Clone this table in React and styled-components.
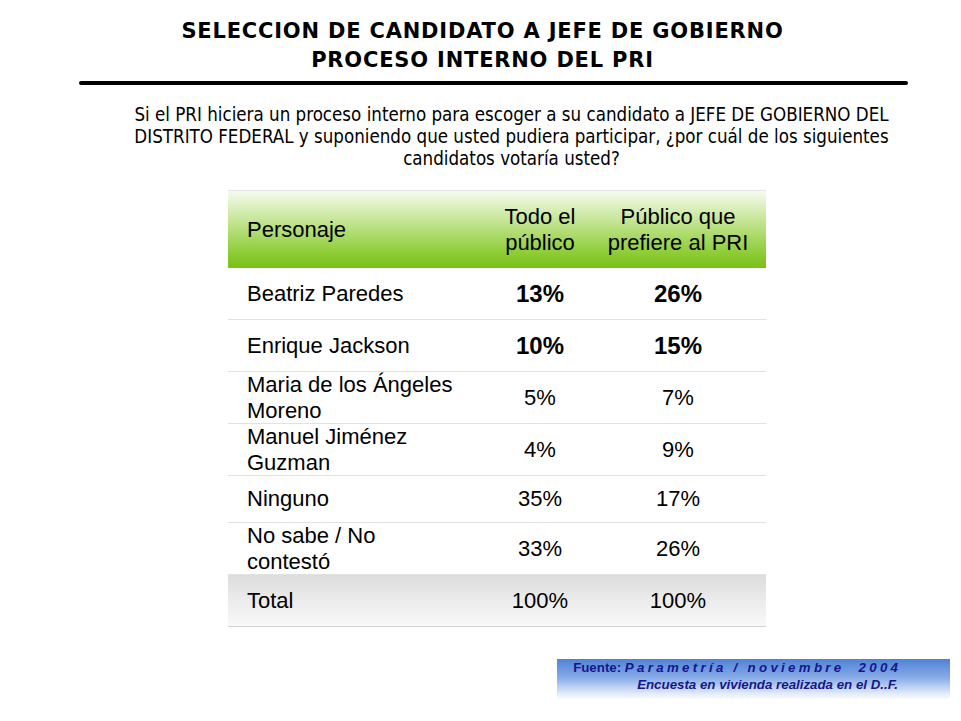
import React from "react";
import styled, { createGlobalStyle } from "styled-components";

const GlobalStyle = createGlobalStyle`
  html, body {
    margin: 0;
    padding: 0;
    background: #ffffff;
  }
`;

const rows = [
  { name: ["Beatriz Paredes"], all: "13%", pri: "26%", strong: true },
  { name: ["Enrique Jackson"], all: "10%", pri: "15%", strong: true },
  { name: ["Maria de los Ángeles", "Moreno"], all: "5%", pri: "7%" },
  { name: ["Manuel Jiménez", "Guzman"], all: "4%", pri: "9%" },
  { name: ["Ninguno"], all: "35%", pri: "17%", height: 47 },
  { name: ["No sabe / No", "contestó"], all: "33%", pri: "26%" },
];

export default function App() {
  return (
    <Slide>
      <GlobalStyle />
      <Title>
        SELECCION DE CANDIDATO A JEFE DE GOBIERNO
        <br />
        PROCESO INTERNO DEL PRI
      </Title>
      <Rule />
      <Question>
        Si el PRI hiciera un proceso interno para escoger a su candidato a JEFE DE GOBIERNO DEL
        <br />
        DISTRITO FEDERAL y suponiendo que usted pudiera participar, ¿por cuál de los siguientes
        <br />
        candidatos votaría usted?
      </Question>
      <Table>
        <HeaderRow>
          <NameCell>Personaje</NameCell>
          <ValueCell>Todo el<br />público</ValueCell>
          <ValueCell>Público que<br />prefiere al PRI</ValueCell>
        </HeaderRow>
        {rows.map((r) => (
          <Row key={r.name.join(" ")} h={r.height || 52}>
            <NameCell>
              {r.name.map((line, i) => (
                <div key={i}>{line}</div>
              ))}
            </NameCell>
            <ValueCell strong={r.strong}>{r.all}</ValueCell>
            <ValueCell strong={r.strong}>{r.pri}</ValueCell>
          </Row>
        ))}
        <TotalRow>
          <NameCell>Total</NameCell>
          <ValueCell>100%</ValueCell>
          <ValueCell>100%</ValueCell>
        </TotalRow>
      </Table>
      <Footer>
        <FooterLine>
          Fuente: <Spaced>Parametría / noviembre  2004</Spaced>
        </FooterLine>
        <FooterLine>
          <em>Encuesta en vivienda realizada en el D..F.</em>
        </FooterLine>
      </Footer>
    </Slide>
  );
}

const Slide = styled.div`
  width: 961px;
  height: 721px;
  display: flex;
  flex-direction: column;
  align-items: center;
  box-sizing: border-box;
  padding-top: 17px;
  background: #ffffff;
  overflow: hidden;
`;

const Title = styled.h1`
  margin: 0 0 0 4px;
  font-family: "DejaVu Sans", Verdana, sans-serif;
  font-weight: bold;
  font-size: 21px;
  letter-spacing: 0.8px;
  line-height: 29px;
  text-align: center;
  color: #000000;
`;

const Rule = styled.div`
  width: 829px;
  height: 4px;
  margin: 6px 0 0 25px;
  border-radius: 2px;
  background: #000000;
`;

const Question = styled.p`
  margin: 19px 0 0 62px;
  font-family: "DejaVu Sans Condensed", "DejaVu Sans", sans-serif;
  font-size: 18.6px;
  line-height: 22px;
  text-align: center;
  white-space: nowrap;
  color: #000000;
`;

const Table = styled.div`
  width: 538px;
  margin: 20px 0 0 33px;
  display: flex;
  flex-direction: column;
  font-family: "Liberation Sans", Arial, sans-serif;
  font-size: 22px;
  color: #000000;
  border-top: 1px solid #e4e4e4;
`;

const Row = styled.div`
  display: grid;
  grid-template-columns: 262px 100px 176px;
  align-items: center;
  height: ${({ h }) => h}px;
  box-sizing: border-box;
  border-bottom: 1px solid #e2e2e2;
  line-height: 26px;
`;

const HeaderRow = styled(Row)`
  height: 77px;
  border-bottom: none;
  background: linear-gradient(to bottom, #f6fbef 0%, #c9e79d 35%, #8ecd36 80%, #78c019 100%);
`;

const TotalRow = styled(Row)`
  height: 52px;
  border-bottom: 1px solid #d2d2d2;
  background: linear-gradient(to bottom, #dcdcdc 0%, #ececec 50%, #f8f8f8 100%);
`;

const NameCell = styled.div`
  padding-left: 19px;
`;

const ValueCell = styled.div`
  text-align: center;
  font-weight: ${({ strong }) => (strong ? "bold" : "normal")};
  font-size: ${({ strong }) => (strong ? "24px" : "22px")};
`;

const Footer = styled.div`
  align-self: flex-end;
  width: 393px;
  height: 41px;
  margin: 32px 11px 0 0;
  box-sizing: border-box;
  padding: 0 52px 0 0;
  background: linear-gradient(to bottom, #4f83d8 0%, #86aae6 45%, #e3ecfa 85%, #ffffff 100%);
  font-family: "Liberation Sans", Arial, sans-serif;
  font-weight: bold;
  font-size: 13.3px;
  line-height: 17px;
  color: #16168a;
  text-align: right;

  em {
    font-style: italic;
  }
`;

const FooterLine = styled.div`
  white-space: pre;
`;

const Spaced = styled.em`
  letter-spacing: 3.3px;
  margin-right: -3.3px;
`;
